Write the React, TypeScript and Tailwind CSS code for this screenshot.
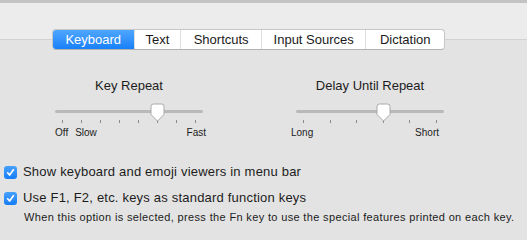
import React from 'react';

const tabs = [
  { label: 'Keyboard', w: 81 },
  { label: 'Text', w: 47 },
  { label: 'Shortcuts', w: 81 },
  { label: 'Input Sources', w: 105 },
  { label: 'Dictation', w: 79 },
];

const Knob: React.FC<{ left: number }> = ({ left }) => (
  <svg
    className="absolute top-0"
    style={{ left }}
    width="15"
    height="19"
    viewBox="0 0 15 19"
  >
    <path
      d="M1 3.5 Q1 1 3.5 1 H11.5 Q14 1 14 3.5 V11.5 L7.5 18 L1 11.5 Z"
      fill="#ffffff"
      stroke="#a9a9a9"
      strokeWidth="1"
    />
  </svg>
);

interface SliderProps {
  title: string;
  ticks: number;
  knob: number;
  children: React.ReactNode;
}

const Slider: React.FC<SliderProps> = ({ title, ticks, knob, children }) => (
  <div className="w-[148px] flex flex-col">
    <div className="text-[13px] leading-[16px] text-[#1c1c1c] text-center">{title}</div>
    <div className="relative h-[17px] mt-[9px]">
      <div className="absolute left-0 right-0 top-[7px] h-[3px] rounded-full bg-[#b9b9b9]" />
      <Knob left={knob} />
    </div>
    <div className="flex justify-between px-[7px] h-[3px]">
      {Array.from({ length: ticks }).map((_, i) => (
        <div key={i} className="w-px h-[3px] bg-[#8a8a8a]" />
      ))}
    </div>
    <div className="mt-[4px] text-[10px] leading-[12px] text-[#1c1c1c] flex">{children}</div>
  </div>
);

const Checkbox: React.FC = () => (
  <div className="w-[13px] h-[13px] rounded-[3px] bg-gradient-to-b from-[#46a1fd] to-[#137cf7] flex items-center justify-center shrink-0">
    <svg width="11" height="11" viewBox="0 0 11 11">
      <path d="M2.6 5.8 L4.6 8 L8.4 2.8" fill="none" stroke="#fff" strokeWidth="1.7" strokeLinecap="round" strokeLinejoin="round" />
    </svg>
  </div>
);

export default function App() {
  return (
    <div
      className="w-[527px] h-[240px] bg-[#e3e3e3] overflow-hidden"
      style={{ fontFamily: '"Liberation Sans", Arial, sans-serif' }}
    >
      <div className="h-[40px] bg-[#ececec] border-t-[3px] border-t-[#c3c3c3] border-b border-b-[#d2d2d2]" />

      <div className="flex ml-[52px] -mt-[11px] h-[21px] w-[393px] rounded-[4px] border border-[#c6c6c6] border-b-[#b3b3b3] bg-white overflow-hidden text-[13px] text-[#1a1a1a]">
        {tabs.map((t, i) => (
          <div
            key={t.label}
            className={
              i === 0
                ? 'flex items-center justify-center bg-gradient-to-b from-[#4ea6fd] to-[#1680f9] text-white'
                : 'flex items-center justify-center border-l border-[#dedede]'
            }
            style={{ width: t.w }}
          >
            {t.label}
          </div>
        ))}
      </div>

      <div className="flex pl-[55px] gap-[93px] mt-[28px]">
        <Slider title="Key Repeat" ticks={8} knob={95}>
          <span>Off</span>
          <span className="ml-[7px]">Slow</span>
          <span className="ml-auto -mr-[3px]">Fast</span>
        </Slider>
        <Slider title="Delay Until Repeat" ticks={6} knob={80}>
          <div className="flex justify-between w-full -mx-[5px]">
            <span>Long</span>
            <span>Short</span>
          </div>
        </Slider>
      </div>

      <div className="mt-[25px] pl-[4px] text-[13px] leading-[16px] text-[#1c1c1c] tracking-[0.2px]">
        <div className="flex items-center gap-[6px]">
          <Checkbox />
          <span>Show keyboard and emoji viewers in menu bar</span>
        </div>
        <div className="flex items-center gap-[6px] mt-[10px]">
          <Checkbox />
          <span>Use F1, F2, etc. keys as standard function keys</span>
        </div>
        <div className="mt-[4px] pl-[20px] text-[11px] leading-[14px] text-[#1c1c1c] tracking-[0.35px] whitespace-nowrap">
          When this option is selected, press the Fn key to use the special features printed on each key.
        </div>
      </div>
    </div>
  );
}
